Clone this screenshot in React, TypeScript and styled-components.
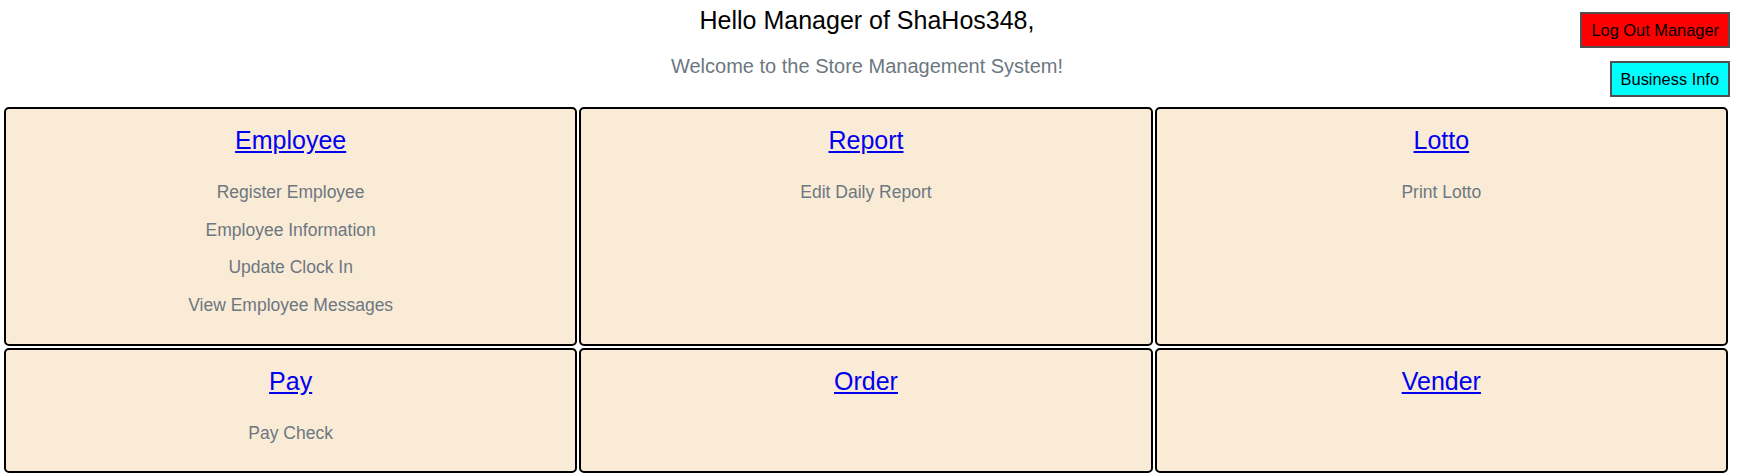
import { FC } from "react";
import styled, { createGlobalStyle } from "styled-components";

const GlobalStyle = createGlobalStyle`
  body {
    margin: 0;
    background-color: #fff;
    font-family: "Liberation Sans", Arial, sans-serif;
  }
`;

const Header = styled.div`
  display: grid;
  grid-template-columns: 1fr auto 1fr;
  padding: 0 8px 10px 4px;
`;
const Greeting = styled.div`
  grid-column: 2;
  text-align: center;
`;
const Hello = styled.div`
  font-size: 25px;
  line-height: 29px;
  margin-top: 6px;
  color: #000;
`;
const Welcome = styled.div`
  font-size: 20px;
  line-height: 23px;
  margin-top: 20px;
  color: #6c7780;
`;
const Actions = styled.div`
  grid-column: 3;
  display: flex;
  flex-direction: column;
  align-items: flex-end;
  gap: 13px;
  padding-top: 12px;
`;
const ActionButton = styled.button<{ $bg: string }>`
  font-family: "Liberation Sans", Arial, sans-serif;
  font-size: 16.4px;
  line-height: 18px;
  padding: 7px 9px;
  border: 2px solid #505050;
  background-color: ${(p) => p.$bg};
  color: #000;
  cursor: pointer;
`;

const Grid = styled.div`
  display: grid;
  grid-template-columns: repeat(3, 1fr);
  column-gap: 2px;
  row-gap: 2px;
  padding: 0 10px 0 4px;
`;
const Card = styled.div`
  background-color: #faebd7;
  border: 2px solid #000;
  border-radius: 5px;
  padding: 16px 0 20px;
  text-align: center;
`;
const Title = styled.a`
  display: inline-block;
  font-size: 25px;
  line-height: 30px;
  color: #0000ee;
  text-decoration: underline;
`;
const Items = styled.div`
  margin-top: 18px;
`;
const Item = styled.div`
  font-size: 17.5px;
  line-height: 20px;
  padding: 8.85px 0;
  color: #6c7780;
`;

interface ISection {
  title: string;
  items: string[];
}

const sections: ISection[] = [
  {
    title: "Employee",
    items: [
      "Register Employee",
      "Employee Information",
      "Update Clock In",
      "View Employee Messages"
    ]
  },
  { title: "Report", items: ["Edit Daily Report"] },
  { title: "Lotto", items: ["Print Lotto"] },
  { title: "Pay", items: ["Pay Check"] },
  { title: "Order", items: [] },
  { title: "Vender", items: [] }
];

const App: FC = () => {
  return (
    <>
      <GlobalStyle />
      <Header>
        <Greeting>
          <Hello>Hello Manager of ShaHos348,</Hello>
          <Welcome>Welcome to the Store Management System!</Welcome>
        </Greeting>
        <Actions>
          <ActionButton $bg="#ff0000">Log Out Manager</ActionButton>
          <ActionButton $bg="#00ffff">Business Info</ActionButton>
        </Actions>
      </Header>
      <Grid>
        {sections.map((s) => (
          <Card key={s.title}>
            <Title href="#">{s.title}</Title>
            <Items>
              {s.items.map((i) => (
                <Item key={i}>{i}</Item>
              ))}
            </Items>
          </Card>
        ))}
      </Grid>
    </>
  );
};

export default App;
